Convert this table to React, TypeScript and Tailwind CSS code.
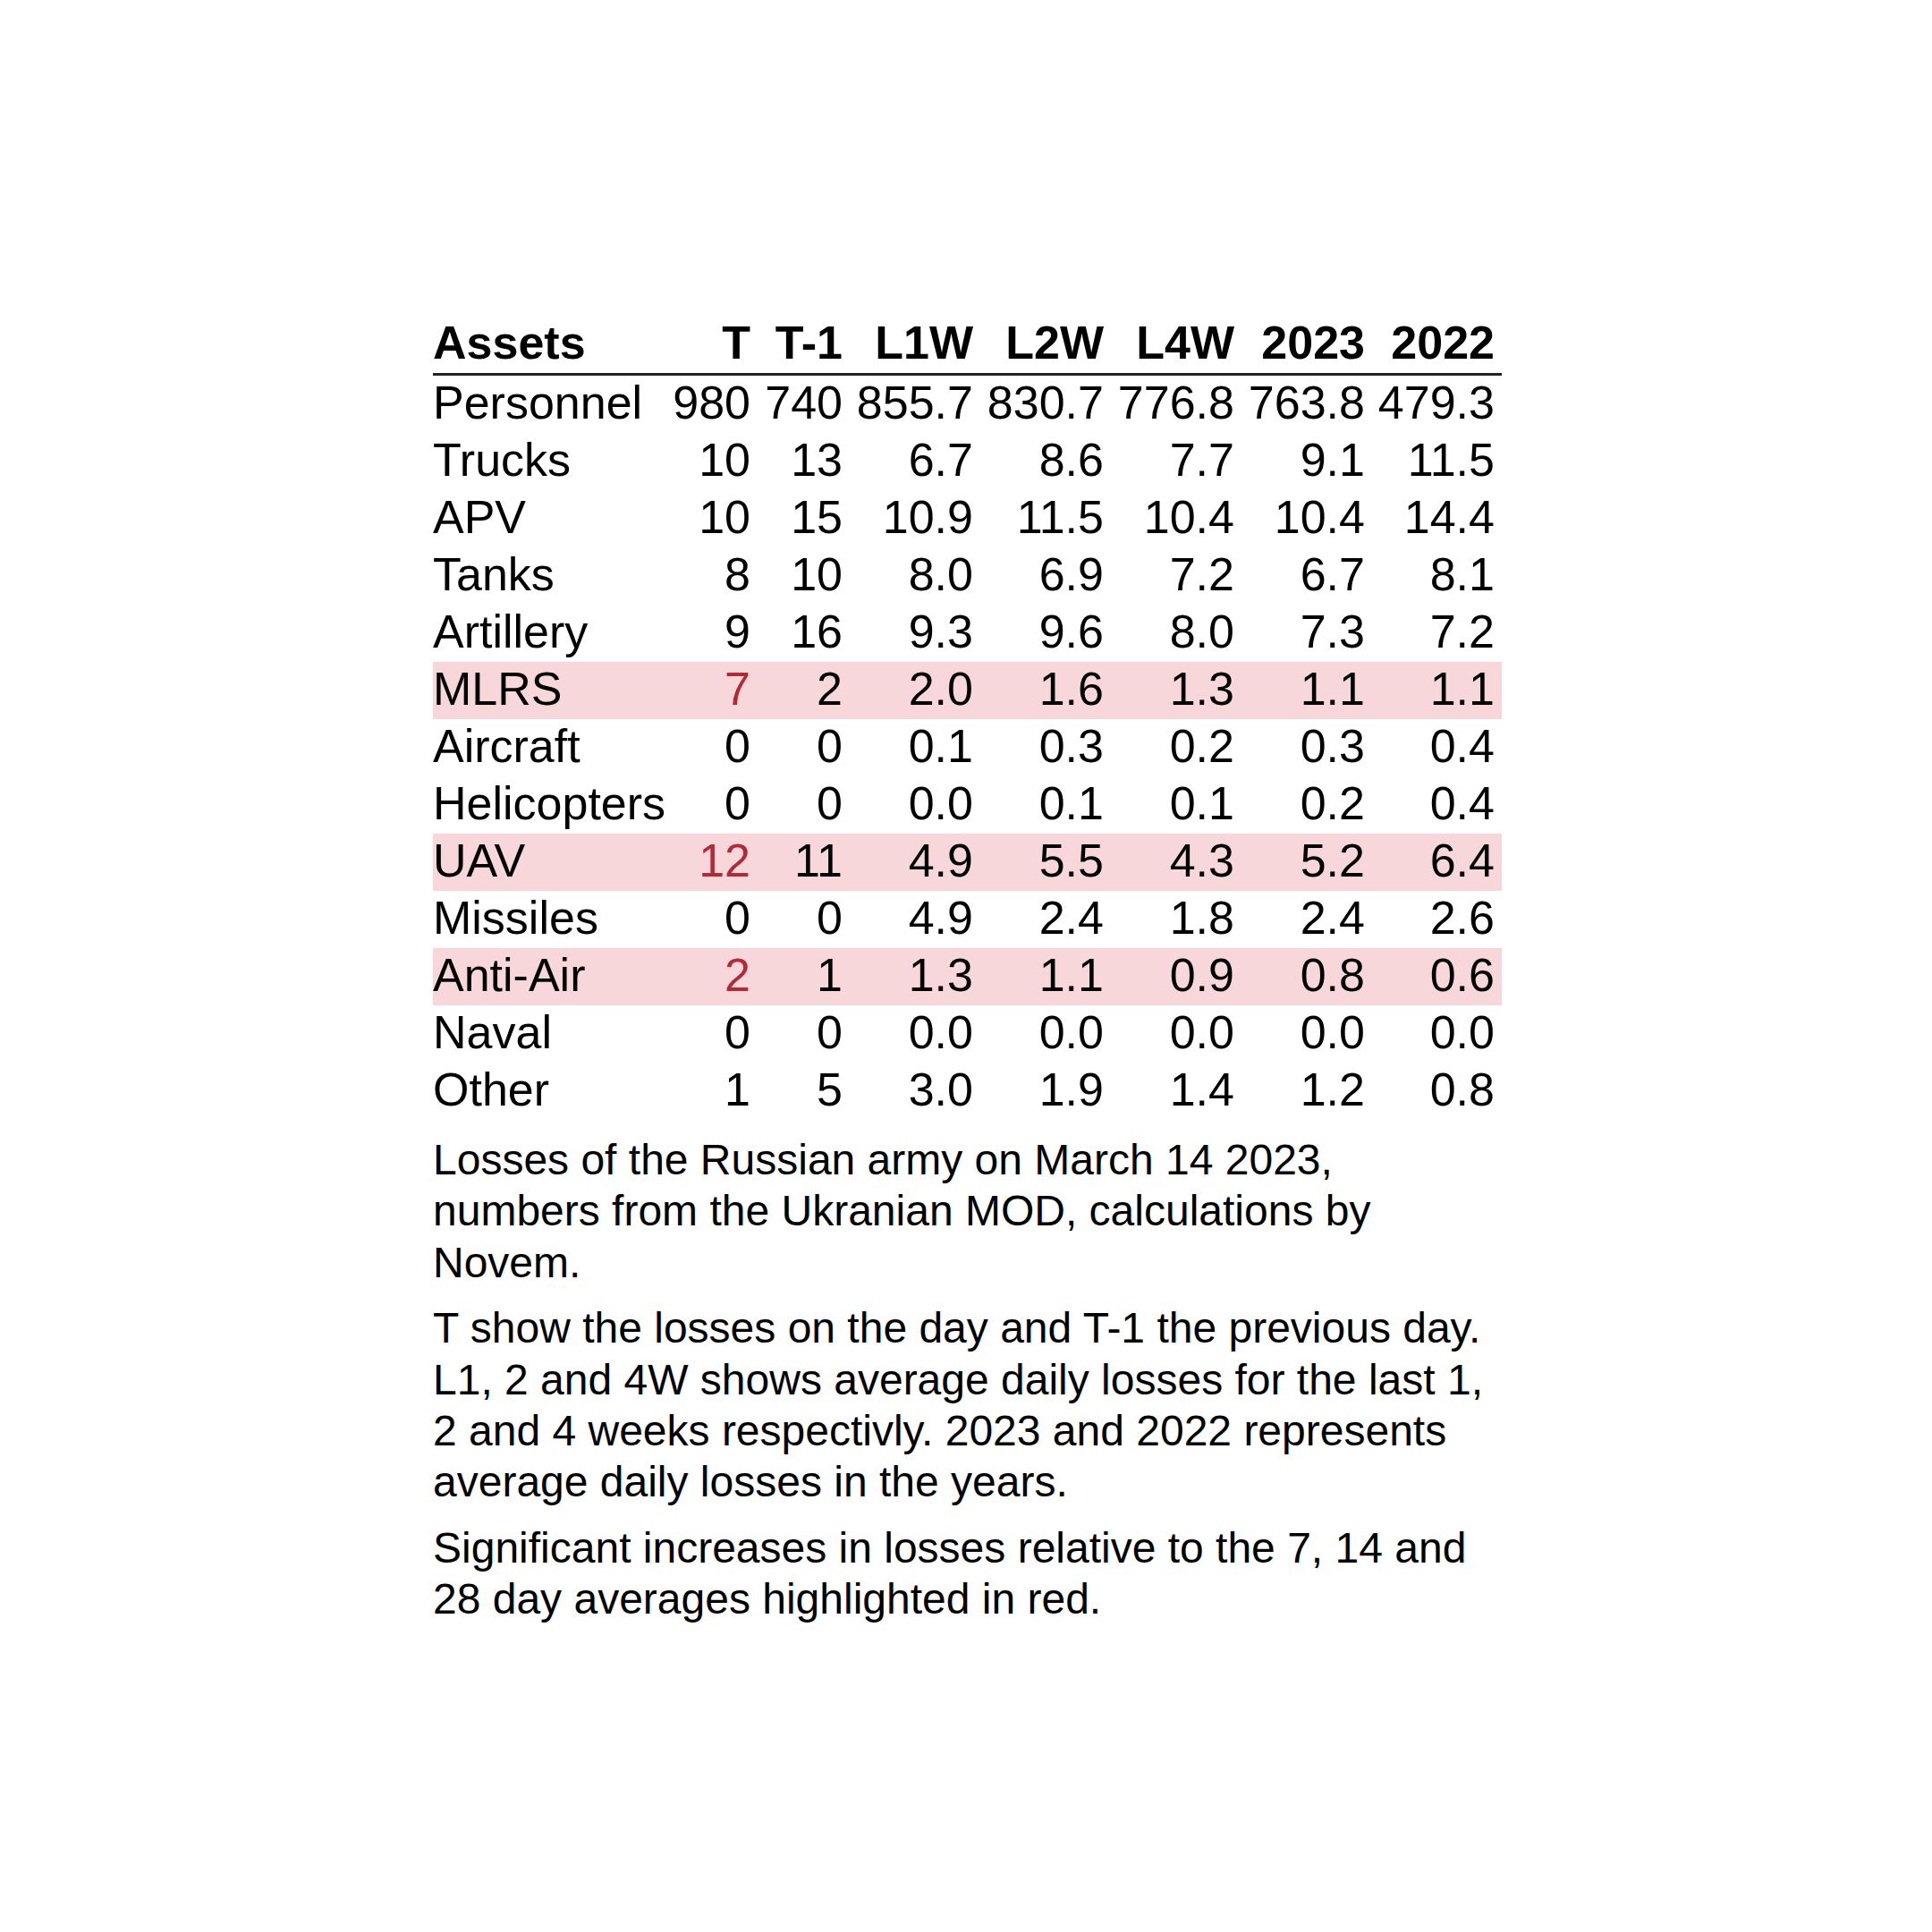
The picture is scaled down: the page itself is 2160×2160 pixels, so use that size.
import React from "react";

type Row = {
  name: string;
  vals: string[];
  hl?: boolean;
  redT?: boolean;
};

const headers = ["T", "T-1", "L1W", "L2W", "L4W", "2023", "2022"];

const rows: Row[] = [
  { name: "Personnel", vals: ["980", "740", "855.7", "830.7", "776.8", "763.8", "479.3"] },
  { name: "Trucks", vals: ["10", "13", "6.7", "8.6", "7.7", "9.1", "11.5"] },
  { name: "APV", vals: ["10", "15", "10.9", "11.5", "10.4", "10.4", "14.4"] },
  { name: "Tanks", vals: ["8", "10", "8.0", "6.9", "7.2", "6.7", "8.1"] },
  { name: "Artillery", vals: ["9", "16", "9.3", "9.6", "8.0", "7.3", "7.2"] },
  { name: "MLRS", vals: ["7", "2", "2.0", "1.6", "1.3", "1.1", "1.1"], hl: true, redT: true },
  { name: "Aircraft", vals: ["0", "0", "0.1", "0.3", "0.2", "0.3", "0.4"] },
  { name: "Helicopters", vals: ["0", "0", "0.0", "0.1", "0.1", "0.2", "0.4"] },
  { name: "UAV", vals: ["12", "11", "4.9", "5.5", "4.3", "5.2", "6.4"], hl: true, redT: true },
  { name: "Missiles", vals: ["0", "0", "4.9", "2.4", "1.8", "2.4", "2.6"] },
  { name: "Anti-Air", vals: ["2", "1", "1.3", "1.1", "0.9", "0.8", "0.6"], hl: true, redT: true },
  { name: "Naval", vals: ["0", "0", "0.0", "0.0", "0.0", "0.0", "0.0"] },
  { name: "Other", vals: ["1", "5", "3.0", "1.9", "1.4", "1.2", "0.8"] },
];

const gridCls =
  "grid grid-cols-[262px_93px_103px_146px_146px_146px_146px_145px] pr-[8px] h-[64px] pb-[4px] leading-[60px] whitespace-nowrap";

export default function App() {
  return (
    <div className="w-[2160px] h-[2160px] bg-white text-black font-['Liberation_Sans',Arial,sans-serif]">
      <div className="pt-[353px] pl-[484px]">
        <div className="w-[1195px]">
          <div className={`${gridCls} text-[52px] font-bold border-b-[3px] border-[#222222] h-[67px]`}>
            <div>Assets</div>
            {headers.map((h) => (
              <div key={h} className="text-right">
                {h}
              </div>
            ))}
          </div>
          {rows.map((r) => (
            <div
              key={r.name}
              className={`${gridCls} text-[52px] ${r.hl ? "bg-[#f8d7da]" : ""}`}
            >
              <div>{r.name}</div>
              {r.vals.map((v, i) => (
                <div
                  key={i}
                  className={`text-right ${i === 0 && r.redT ? "text-[#b02a37]" : ""}`}
                >
                  {v}
                </div>
              ))}
            </div>
          ))}
          <div className="text-[48px] leading-[57.4px]">
            <p className="mt-4">
              Losses of the Russian army on March 14 2023, numbers from the Ukranian MOD, calculations by Novem.
            </p>
            <p className="mt-4">
              T show the losses on the day and T-1 the previous day. L1, 2 and 4W shows average daily losses for
              the last 1, 2 and 4 weeks respectivly. 2023 and 2022 represents average daily losses in the years.
            </p>
            <p className="mt-4">
              Significant increases in losses relative to the 7, 14 and 28 day averages highlighted in red.
            </p>
          </div>
        </div>
      </div>
    </div>
  );
}
